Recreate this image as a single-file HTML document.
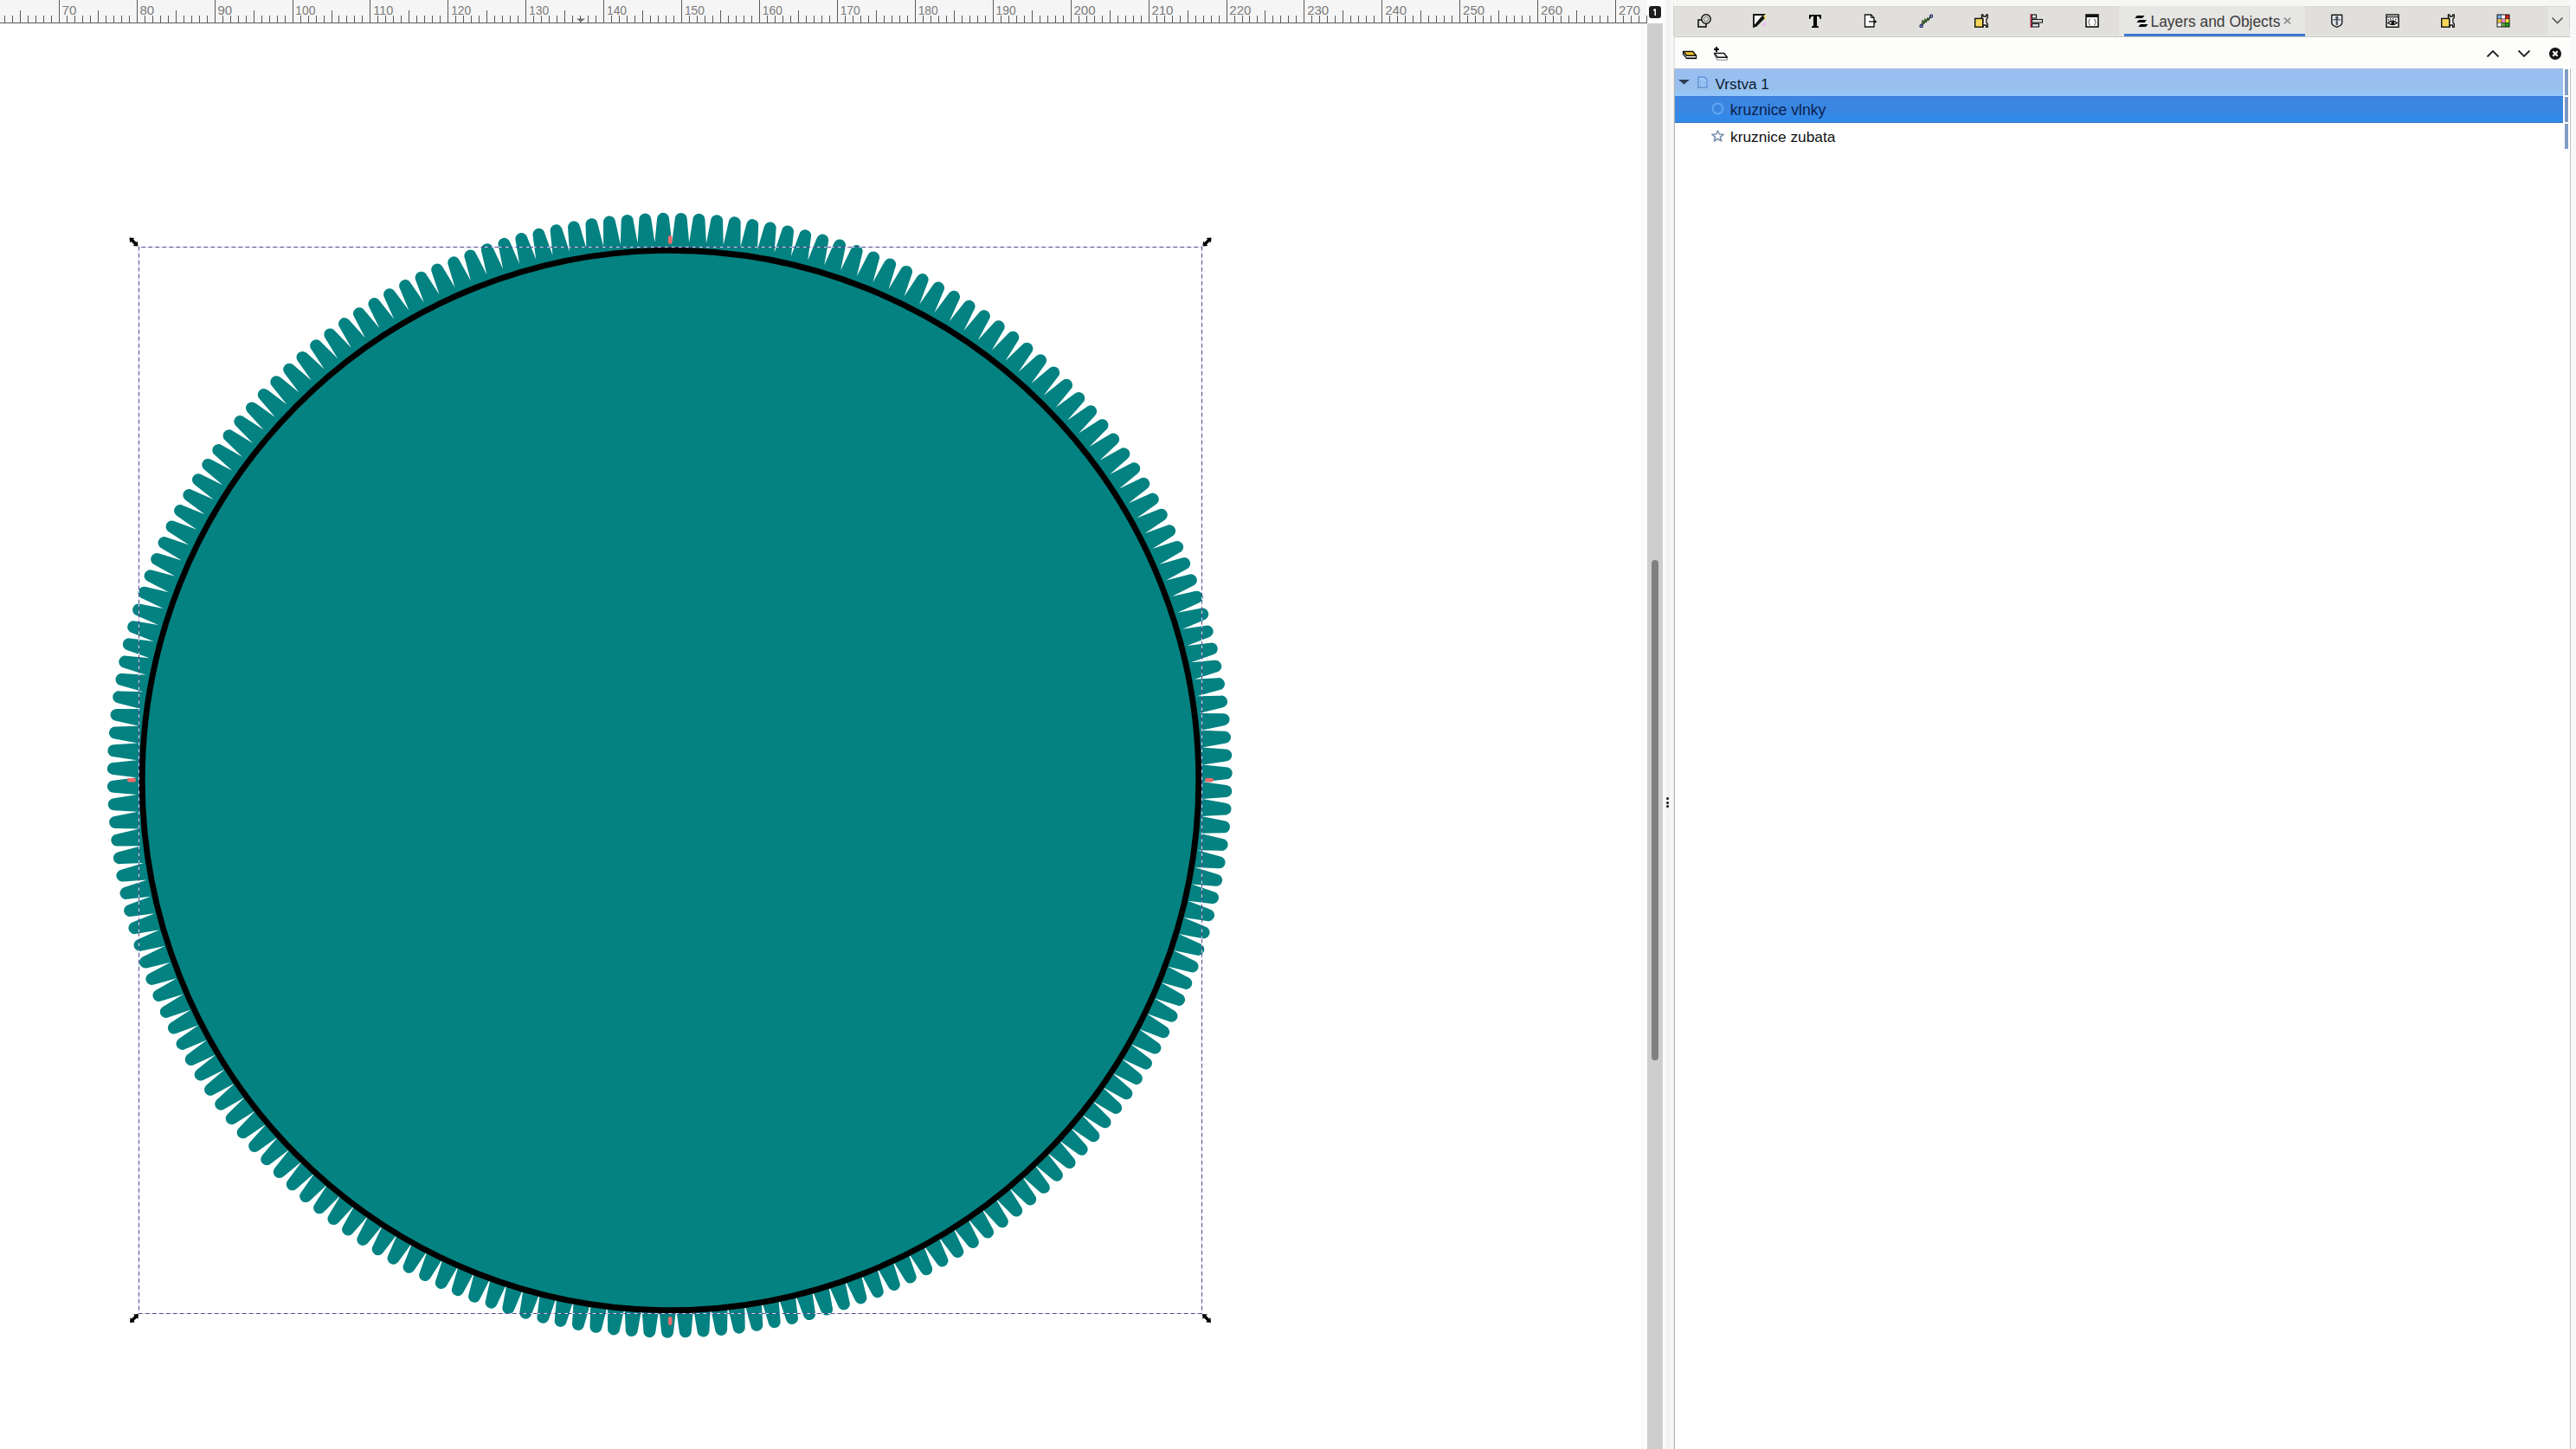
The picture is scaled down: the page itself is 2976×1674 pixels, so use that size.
<!DOCTYPE html>
<html><head><meta charset="utf-8"><style>
html,body{margin:0;padding:0;width:2976px;height:1674px;overflow:hidden;background:#fff;}
.abs{position:absolute;display:block;}
.txt{font-family:"Liberation Sans",sans-serif;white-space:nowrap;}
</style></head><body>
<svg class="abs" style="left:0;top:27px" width="1903" height="1647" viewBox="0 27 1903 1647">
<path d="M756.44 279.99L759.04 252.92A7.0 7.0 0 0 1 773.04 252.75L776.29 279.76L779.76 252.78A7.0 7.0 0 0 1 793.76 253.06L796.13 280.16L800.47 253.31A7.0 7.0 0 0 1 814.45 254.04L815.95 281.20L821.15 254.50A7.0 7.0 0 0 1 835.10 255.68L835.73 282.88L841.79 256.36A7.0 7.0 0 0 1 855.69 257.99L855.44 285.19L862.35 258.88A7.0 7.0 0 0 1 876.19 260.96L875.07 288.14L882.82 262.07A7.0 7.0 0 0 1 896.59 264.59L894.59 291.72L903.18 265.91A7.0 7.0 0 0 1 916.86 268.88L913.99 295.93L923.40 270.41A7.0 7.0 0 0 1 936.98 273.81L933.24 300.75L943.47 275.55A7.0 7.0 0 0 1 956.93 279.40L952.32 306.20L963.36 281.34A7.0 7.0 0 0 1 976.69 285.62L971.22 312.26L983.06 287.77A7.0 7.0 0 0 1 996.25 292.47L989.92 318.93L1002.54 294.83A7.0 7.0 0 0 1 1015.57 299.95L1008.39 326.19L1021.78 302.51A7.0 7.0 0 0 1 1034.63 308.05L1026.62 334.04L1040.76 310.81A7.0 7.0 0 0 1 1053.43 316.76L1044.58 342.48L1059.47 319.72A7.0 7.0 0 0 1 1071.94 326.07L1062.27 351.49L1077.87 329.22A7.0 7.0 0 0 1 1090.14 335.97L1079.65 361.07L1095.97 339.31A7.0 7.0 0 0 1 1108.01 346.46L1096.72 371.20L1113.73 349.98A7.0 7.0 0 0 1 1125.53 357.51L1113.45 381.88L1131.13 361.22A7.0 7.0 0 0 1 1142.69 369.12L1129.83 393.09L1148.17 373.01A7.0 7.0 0 0 1 1159.46 381.28L1145.83 404.82L1164.81 385.34A7.0 7.0 0 0 1 1175.83 393.98L1161.46 417.06L1181.05 398.20A7.0 7.0 0 0 1 1191.79 407.19L1176.68 429.80L1196.87 411.58A7.0 7.0 0 0 1 1207.31 420.91L1191.48 443.03L1212.25 425.47A7.0 7.0 0 0 1 1222.39 435.12L1205.85 456.72L1227.17 439.84A7.0 7.0 0 0 1 1236.99 449.82L1219.77 470.87L1241.63 454.68A7.0 7.0 0 0 1 1251.12 464.97L1233.22 485.46L1255.59 469.98A7.0 7.0 0 0 1 1264.75 480.57L1246.20 500.47L1269.06 485.73A7.0 7.0 0 0 1 1277.87 496.61L1258.69 515.90L1282.01 501.90A7.0 7.0 0 0 1 1290.46 513.06L1270.68 531.72L1294.44 518.48A7.0 7.0 0 0 1 1302.53 529.90L1282.15 547.91L1306.32 535.45A7.0 7.0 0 0 1 1314.04 547.13L1293.09 564.47L1317.65 552.79A7.0 7.0 0 0 1 1324.99 564.71L1303.49 581.38L1328.42 570.49A7.0 7.0 0 0 1 1335.37 582.64L1313.34 598.61L1338.61 588.53A7.0 7.0 0 0 1 1345.16 600.90L1322.64 616.14L1348.21 606.89A7.0 7.0 0 0 1 1354.36 619.46L1331.36 633.97L1357.22 625.54A7.0 7.0 0 0 1 1362.96 638.31L1339.50 652.07L1365.62 644.48A7.0 7.0 0 0 1 1370.95 657.42L1347.06 670.42L1373.41 663.68A7.0 7.0 0 0 1 1378.32 676.79L1354.02 689.01L1380.57 683.12A7.0 7.0 0 0 1 1385.06 696.38L1360.38 707.81L1387.11 702.78A7.0 7.0 0 0 1 1391.17 716.18L1366.13 726.81L1393.01 722.64A7.0 7.0 0 0 1 1396.63 736.16L1371.27 745.98L1398.26 742.68A7.0 7.0 0 0 1 1401.45 756.31L1375.78 765.31L1402.87 762.87A7.0 7.0 0 0 1 1405.61 776.60L1379.67 784.77L1406.83 783.21A7.0 7.0 0 0 1 1409.13 797.02L1382.93 804.35L1410.12 803.66A7.0 7.0 0 0 1 1411.98 817.54L1385.56 824.02L1412.76 824.21A7.0 7.0 0 0 1 1414.16 838.14L1387.55 843.77L1414.73 844.84A7.0 7.0 0 0 1 1415.69 858.80L1388.91 863.57L1416.04 865.51A7.0 7.0 0 0 1 1416.54 879.50L1389.63 883.40L1416.68 886.22A7.0 7.0 0 0 1 1416.73 900.22L1389.70 903.25L1416.65 906.94A7.0 7.0 0 0 1 1416.26 920.93L1389.14 923.09L1415.96 927.64A7.0 7.0 0 0 1 1415.11 941.62L1387.94 942.90L1414.60 948.32A7.0 7.0 0 0 1 1413.30 962.26L1386.10 962.66L1412.57 968.94A7.0 7.0 0 0 1 1410.83 982.83L1383.63 982.36L1409.88 989.48A7.0 7.0 0 0 1 1407.69 1003.30L1380.52 1001.96L1406.53 1009.92A7.0 7.0 0 0 1 1403.90 1023.67L1376.79 1021.45L1402.53 1030.25A7.0 7.0 0 0 1 1399.45 1043.91L1372.43 1040.81L1397.87 1050.44A7.0 7.0 0 0 1 1394.35 1063.99L1367.44 1060.03L1392.56 1070.46A7.0 7.0 0 0 1 1388.61 1083.89L1361.84 1079.07L1386.61 1090.31A7.0 7.0 0 0 1 1382.23 1103.60L1355.63 1097.92L1380.02 1109.95A7.0 7.0 0 0 1 1375.22 1123.10L1348.81 1116.56L1372.81 1129.37A7.0 7.0 0 0 1 1367.58 1142.36L1341.40 1134.97L1364.97 1148.55A7.0 7.0 0 0 1 1359.33 1161.36L1333.40 1153.13L1356.52 1167.46A7.0 7.0 0 0 1 1350.47 1180.09L1324.82 1171.03L1347.46 1186.10A7.0 7.0 0 0 1 1341.01 1198.52L1315.66 1188.64L1337.81 1204.43A7.0 7.0 0 0 1 1330.96 1216.64L1305.95 1205.95L1327.58 1222.44A7.0 7.0 0 0 1 1320.33 1234.42L1295.68 1222.93L1316.76 1240.11A7.0 7.0 0 0 1 1309.14 1251.85L1284.87 1239.57L1305.39 1257.43A7.0 7.0 0 0 1 1297.39 1268.92L1273.52 1255.86L1293.46 1274.37A7.0 7.0 0 0 1 1285.09 1285.59L1261.66 1271.78L1280.99 1290.91A7.0 7.0 0 0 1 1272.27 1301.86L1249.30 1287.30L1268.00 1307.05A7.0 7.0 0 0 1 1258.93 1317.71L1236.44 1302.42L1254.49 1322.76A7.0 7.0 0 0 1 1245.08 1333.12L1223.09 1317.11L1240.49 1338.02A7.0 7.0 0 0 1 1230.75 1348.08L1209.29 1331.37L1226.00 1352.83A7.0 7.0 0 0 1 1215.94 1362.57L1195.03 1345.17L1211.04 1367.16A7.0 7.0 0 0 1 1200.67 1376.57L1180.33 1358.51L1195.62 1381.01A7.0 7.0 0 0 1 1184.96 1390.08L1165.21 1371.37L1179.77 1394.35A7.0 7.0 0 0 1 1168.82 1403.07L1149.68 1383.73L1163.50 1407.17A7.0 7.0 0 0 1 1152.27 1415.53L1133.77 1395.59L1146.82 1419.46A7.0 7.0 0 0 1 1135.33 1427.46L1117.48 1406.93L1129.75 1431.20A7.0 7.0 0 0 1 1118.01 1438.83L1100.83 1417.74L1112.32 1442.40A7.0 7.0 0 0 1 1100.34 1449.64L1083.85 1428.01L1094.53 1453.02A7.0 7.0 0 0 1 1082.32 1459.87L1066.54 1437.72L1076.41 1463.06A7.0 7.0 0 0 1 1063.99 1469.52L1048.93 1446.87L1057.98 1472.52A7.0 7.0 0 0 1 1045.35 1478.57L1031.03 1455.45L1039.25 1481.38A7.0 7.0 0 0 1 1026.44 1487.02L1012.86 1463.45L1020.25 1489.63A7.0 7.0 0 0 1 1007.26 1494.85L994.45 1470.86L1000.98 1497.26A7.0 7.0 0 0 1 987.84 1502.06L975.81 1477.67L981.49 1504.27A7.0 7.0 0 0 1 968.19 1508.65L956.96 1483.88L961.78 1510.64A7.0 7.0 0 0 1 948.35 1514.59L937.91 1489.47L941.87 1516.38A7.0 7.0 0 0 1 928.32 1519.90L918.70 1494.45L921.79 1521.48A7.0 7.0 0 0 1 908.13 1524.55L899.34 1498.81L901.55 1525.92A7.0 7.0 0 0 1 887.80 1528.55L879.85 1502.54L881.19 1529.71A7.0 7.0 0 0 1 867.36 1531.90L860.24 1505.65L860.71 1532.84A7.0 7.0 0 0 1 846.82 1534.59L840.55 1508.12L840.14 1535.31A7.0 7.0 0 0 1 826.20 1536.61L820.79 1509.95L819.50 1537.12A7.0 7.0 0 0 1 805.52 1537.96L800.97 1511.15L798.81 1538.26A7.0 7.0 0 0 1 784.82 1538.65L781.14 1511.71L778.10 1538.74A7.0 7.0 0 0 1 764.10 1538.68L761.29 1511.62L757.38 1538.54A7.0 7.0 0 0 1 743.39 1538.03L741.45 1510.90L736.68 1537.68A7.0 7.0 0 0 1 722.72 1536.72L721.65 1509.54L716.02 1536.15A7.0 7.0 0 0 1 702.09 1534.74L701.91 1507.55L695.42 1533.96A7.0 7.0 0 0 1 681.55 1532.10L682.23 1504.91L674.90 1531.11A7.0 7.0 0 0 1 661.09 1528.80L662.66 1501.65L654.48 1527.59A7.0 7.0 0 0 1 640.76 1524.85L643.19 1497.76L634.19 1523.42A7.0 7.0 0 0 1 620.56 1520.23L623.87 1493.24L614.04 1518.60A7.0 7.0 0 0 1 600.52 1514.98L604.70 1488.10L594.06 1513.13A7.0 7.0 0 0 1 580.66 1509.07L585.70 1482.35L574.26 1507.02A7.0 7.0 0 0 1 561.00 1502.53L566.90 1475.98L554.67 1500.28A7.0 7.0 0 0 1 541.56 1495.37L548.32 1469.02L535.31 1492.91A7.0 7.0 0 0 1 522.37 1487.57L529.96 1461.46L516.20 1484.92A7.0 7.0 0 0 1 503.43 1479.17L511.87 1453.31L497.35 1476.31A7.0 7.0 0 0 1 484.78 1470.16L494.04 1444.58L478.79 1467.11A7.0 7.0 0 0 1 466.42 1460.55L476.50 1435.29L460.54 1457.31A7.0 7.0 0 0 1 448.39 1450.36L459.28 1425.43L442.61 1446.93A7.0 7.0 0 0 1 430.69 1439.59L442.38 1415.03L425.02 1435.97A7.0 7.0 0 0 1 413.35 1428.25L425.82 1404.08L407.80 1424.46A7.0 7.0 0 0 1 396.38 1416.36L409.62 1392.61L390.96 1412.39A7.0 7.0 0 0 1 379.80 1403.94L393.81 1380.62L374.51 1399.79A7.0 7.0 0 0 1 363.63 1390.98L378.38 1368.13L358.48 1386.67A7.0 7.0 0 0 1 347.89 1377.51L363.37 1355.15L342.88 1373.04A7.0 7.0 0 0 1 332.59 1363.54L348.78 1341.69L327.73 1358.91A7.0 7.0 0 0 1 317.75 1349.09L334.64 1327.76L313.04 1344.30A7.0 7.0 0 0 1 303.38 1334.16L320.95 1313.39L298.83 1329.22A7.0 7.0 0 0 1 289.50 1318.78L307.73 1298.59L285.11 1313.70A7.0 7.0 0 0 1 276.13 1302.96L294.99 1283.37L271.90 1297.74A7.0 7.0 0 0 1 263.27 1286.72L282.75 1267.74L259.21 1281.36A7.0 7.0 0 0 1 250.94 1270.07L271.02 1251.73L247.05 1264.59A7.0 7.0 0 0 1 239.15 1253.03L259.82 1235.35L235.45 1247.43A7.0 7.0 0 0 1 227.92 1235.62L249.14 1218.62L224.40 1229.90A7.0 7.0 0 0 1 217.25 1217.86L239.01 1201.55L213.92 1212.03A7.0 7.0 0 0 1 207.16 1199.77L229.44 1184.16L204.02 1193.83A7.0 7.0 0 0 1 197.66 1181.36L220.43 1166.48L194.71 1175.32A7.0 7.0 0 0 1 188.76 1162.65L212.00 1148.51L186.00 1156.52A7.0 7.0 0 0 1 180.47 1143.67L204.14 1130.28L177.91 1137.45A7.0 7.0 0 0 1 172.79 1124.42L196.88 1111.81L170.43 1118.13A7.0 7.0 0 0 1 165.73 1104.94L190.22 1093.11L163.58 1098.58A7.0 7.0 0 0 1 159.31 1085.25L184.17 1074.21L157.36 1078.82A7.0 7.0 0 0 1 153.52 1065.35L178.72 1055.13L151.78 1058.87A7.0 7.0 0 0 1 148.38 1045.29L173.90 1035.87L146.85 1038.74A7.0 7.0 0 0 1 143.89 1025.06L169.70 1016.48L142.57 1018.47A7.0 7.0 0 0 1 140.05 1004.70L166.12 996.95L138.94 998.08A7.0 7.0 0 0 1 136.87 984.23L163.18 977.33L135.98 977.57A7.0 7.0 0 0 1 134.35 963.67L160.86 957.61L133.67 956.98A7.0 7.0 0 0 1 132.49 943.03L159.19 937.84L132.03 936.33A7.0 7.0 0 0 1 131.30 922.35L158.15 918.02L131.06 915.64A7.0 7.0 0 0 1 130.78 901.64L157.75 898.17L130.75 894.92A7.0 7.0 0 0 1 130.92 880.92L158.00 878.33L131.11 874.21A7.0 7.0 0 0 1 131.73 860.22L158.88 858.50L132.14 853.51A7.0 7.0 0 0 1 133.21 839.56L160.40 838.71L133.83 832.87A7.0 7.0 0 0 1 135.35 818.95L162.55 818.98L136.19 812.28A7.0 7.0 0 0 1 138.16 798.42L165.34 799.33L139.21 791.79A7.0 7.0 0 0 1 141.62 778.00L168.77 779.78L142.89 771.40A7.0 7.0 0 0 1 145.75 757.69L172.82 760.35L147.22 751.14A7.0 7.0 0 0 1 150.52 737.53L177.49 741.06L152.21 731.03A7.0 7.0 0 0 1 155.94 717.54L182.78 721.93L157.84 711.09A7.0 7.0 0 0 1 162.00 697.73L188.69 702.98L164.10 691.35A7.0 7.0 0 0 1 168.70 678.12L195.20 684.23L171.01 671.81A7.0 7.0 0 0 1 176.02 658.74L202.32 665.71L178.53 652.51A7.0 7.0 0 0 1 183.97 639.61L210.02 647.42L186.68 633.46A7.0 7.0 0 0 1 192.53 620.74L218.32 629.38L195.43 614.68A7.0 7.0 0 0 1 201.69 602.16L227.19 611.63L204.79 596.20A7.0 7.0 0 0 1 211.44 583.88L236.62 594.17L214.73 578.02A7.0 7.0 0 0 1 221.78 565.93L246.62 577.02L225.26 560.18A7.0 7.0 0 0 1 232.70 548.32L257.16 560.20L236.35 542.68A7.0 7.0 0 0 1 244.17 531.07L268.24 543.74L248.01 525.55A7.0 7.0 0 0 1 256.19 514.20L279.84 527.63L260.21 508.81A7.0 7.0 0 0 1 268.75 497.72L291.96 511.91L272.94 492.47A7.0 7.0 0 0 1 281.84 481.66L304.57 496.59L286.19 476.54A7.0 7.0 0 0 1 295.43 466.03L317.68 481.68L299.95 461.05A7.0 7.0 0 0 1 309.53 450.84L331.25 467.20L314.20 446.01A7.0 7.0 0 0 1 324.10 436.12L345.29 453.17L328.93 431.44A7.0 7.0 0 0 1 339.14 421.87L359.77 439.60L344.12 417.35A7.0 7.0 0 0 1 354.63 408.11L374.68 426.50L359.75 403.76A7.0 7.0 0 0 1 370.56 394.86L390.00 413.88L375.82 390.68A7.0 7.0 0 0 1 386.91 382.13L405.73 401.77L392.29 378.12A7.0 7.0 0 0 1 403.65 369.94L421.83 390.17L409.17 366.10A7.0 7.0 0 0 1 420.79 358.29L438.30 379.10L426.42 354.63A7.0 7.0 0 0 1 438.28 347.20L455.12 368.56L444.03 343.72A7.0 7.0 0 0 1 456.13 336.67L472.27 358.57L461.99 333.39A7.0 7.0 0 0 1 474.31 326.73L489.73 349.13L480.27 323.63A7.0 7.0 0 0 1 492.79 317.38L507.49 340.27L498.85 314.48A7.0 7.0 0 0 1 511.57 308.63L525.52 331.98L517.72 305.92A7.0 7.0 0 0 1 530.62 300.49L543.81 324.27L536.85 297.98A7.0 7.0 0 0 1 549.92 292.96L562.34 317.16L556.23 290.66A7.0 7.0 0 0 1 569.46 286.07L581.09 310.65L575.84 283.96A7.0 7.0 0 0 1 589.21 279.80L600.04 304.75L595.65 277.91A7.0 7.0 0 0 1 609.15 274.18L619.17 299.46L615.65 272.49A7.0 7.0 0 0 1 629.26 269.20L638.46 294.79L635.81 267.72A7.0 7.0 0 0 1 649.52 264.87L657.89 290.74L656.12 263.60A7.0 7.0 0 0 1 669.91 261.19L677.44 287.32L676.54 260.14A7.0 7.0 0 0 1 690.40 258.17L697.09 284.54L697.07 257.34A7.0 7.0 0 0 1 710.99 255.82L716.83 282.39L717.68 255.20A7.0 7.0 0 0 1 731.63 254.13L736.61 280.87L738.34 253.73A7.0 7.0 0 0 1 752.33 253.11L756.44 279.99Z" fill="#038281"/>
<ellipse cx="774.5" cy="901.5" rx="610.25" ry="612.25" fill="#038281" stroke="#000" stroke-width="6.8"/>
<rect x="160.5" y="285.5" width="1228" height="1232" fill="none" stroke="#dcd8fc" stroke-width="1"/>
<g stroke="#4e4a8a" stroke-width="1" stroke-dasharray="4.5 3.5" fill="none">
<path d="M160 285.5 H1389" stroke-dashoffset="4.5"/>
<path d="M160 1517.5 H1389"/>
<path d="M160.5 285 V1518"/>
<path d="M1388.5 285 V1518"/>
</g>
<g fill="#000"><path d="M149.5 274.5 L150.1 280.4 L151.5 279.0 L155.0 282.5 L153.6 283.9 L159.5 284.5 L158.9 278.6 L157.5 280.0 L154.0 276.5 L155.4 275.1 Z"/><path d="M1389.5 284.5 L1395.4 283.9 L1394.0 282.5 L1397.5 279.0 L1398.9 280.4 L1399.5 274.5 L1393.6 275.1 L1395.0 276.5 L1391.5 280.0 L1390.1 278.6 Z"/><path d="M150.0 1528.0 L155.9 1527.4 L154.5 1526.0 L158.0 1522.5 L159.4 1523.9 L160.0 1518.0 L154.1 1518.6 L155.5 1520.0 L152.0 1523.5 L150.6 1522.1 Z"/><path d="M1389.0 1518.0 L1389.6 1523.9 L1391.0 1522.5 L1394.5 1526.0 L1393.1 1527.4 L1399.0 1528.0 L1398.4 1522.1 L1397.0 1523.5 L1393.5 1520.0 L1394.9 1518.6 Z"/></g>
<g fill="#ef6b6b">
<rect x="772" y="272" width="4.5" height="10" rx="2.2"/>
<rect x="772" y="1521" width="4.5" height="10" rx="2.2"/>
<rect x="147" y="899" width="10" height="4.5" rx="2.2"/>
<rect x="1392" y="899" width="10" height="4.5" rx="2.2"/>
</g>
</svg>
<svg class="abs" style="left:0;top:0" width="1903" height="27" viewBox="0 0 1903 27">
<rect width="1903" height="27" fill="#f5f5f5"/>
<g fill="#5a5a5a"><rect x="5" y="18" width="1" height="8"/><rect x="14" y="18" width="1" height="8"/><rect x="23" y="12" width="1" height="14"/><rect x="32" y="18" width="1" height="8"/><rect x="41" y="18" width="1" height="8"/><rect x="50" y="18" width="1" height="8"/><rect x="59" y="18" width="1" height="8"/><rect x="68" y="0" width="1" height="26"/><rect x="77" y="18" width="1" height="8"/><rect x="86" y="18" width="1" height="8"/><rect x="95" y="18" width="1" height="8"/><rect x="104" y="18" width="1" height="8"/><rect x="113" y="12" width="1" height="14"/><rect x="122" y="18" width="1" height="8"/><rect x="131" y="18" width="1" height="8"/><rect x="140" y="18" width="1" height="8"/><rect x="149" y="18" width="1" height="8"/><rect x="158" y="0" width="1" height="26"/><rect x="167" y="18" width="1" height="8"/><rect x="176" y="18" width="1" height="8"/><rect x="185" y="18" width="1" height="8"/><rect x="194" y="18" width="1" height="8"/><rect x="203" y="12" width="1" height="14"/><rect x="212" y="18" width="1" height="8"/><rect x="221" y="18" width="1" height="8"/><rect x="230" y="18" width="1" height="8"/><rect x="239" y="18" width="1" height="8"/><rect x="248" y="0" width="1" height="26"/><rect x="257" y="18" width="1" height="8"/><rect x="266" y="18" width="1" height="8"/><rect x="275" y="18" width="1" height="8"/><rect x="284" y="18" width="1" height="8"/><rect x="293" y="12" width="1" height="14"/><rect x="302" y="18" width="1" height="8"/><rect x="311" y="18" width="1" height="8"/><rect x="320" y="18" width="1" height="8"/><rect x="329" y="18" width="1" height="8"/><rect x="338" y="0" width="1" height="26"/><rect x="347" y="18" width="1" height="8"/><rect x="356" y="18" width="1" height="8"/><rect x="365" y="18" width="1" height="8"/><rect x="374" y="18" width="1" height="8"/><rect x="383" y="12" width="1" height="14"/><rect x="391" y="18" width="1" height="8"/><rect x="400" y="18" width="1" height="8"/><rect x="409" y="18" width="1" height="8"/><rect x="418" y="18" width="1" height="8"/><rect x="427" y="0" width="1" height="26"/><rect x="436" y="18" width="1" height="8"/><rect x="445" y="18" width="1" height="8"/><rect x="454" y="18" width="1" height="8"/><rect x="463" y="18" width="1" height="8"/><rect x="472" y="12" width="1" height="14"/><rect x="481" y="18" width="1" height="8"/><rect x="490" y="18" width="1" height="8"/><rect x="499" y="18" width="1" height="8"/><rect x="508" y="18" width="1" height="8"/><rect x="517" y="0" width="1" height="26"/><rect x="526" y="18" width="1" height="8"/><rect x="535" y="18" width="1" height="8"/><rect x="544" y="18" width="1" height="8"/><rect x="553" y="18" width="1" height="8"/><rect x="562" y="12" width="1" height="14"/><rect x="571" y="18" width="1" height="8"/><rect x="580" y="18" width="1" height="8"/><rect x="589" y="18" width="1" height="8"/><rect x="598" y="18" width="1" height="8"/><rect x="607" y="0" width="1" height="26"/><rect x="616" y="18" width="1" height="8"/><rect x="625" y="18" width="1" height="8"/><rect x="634" y="18" width="1" height="8"/><rect x="643" y="18" width="1" height="8"/><rect x="652" y="12" width="1" height="14"/><rect x="661" y="18" width="1" height="8"/><rect x="670" y="18" width="1" height="8"/><rect x="679" y="18" width="1" height="8"/><rect x="688" y="18" width="1" height="8"/><rect x="697" y="0" width="1" height="26"/><rect x="706" y="18" width="1" height="8"/><rect x="715" y="18" width="1" height="8"/><rect x="724" y="18" width="1" height="8"/><rect x="733" y="18" width="1" height="8"/><rect x="742" y="12" width="1" height="14"/><rect x="751" y="18" width="1" height="8"/><rect x="760" y="18" width="1" height="8"/><rect x="769" y="18" width="1" height="8"/><rect x="778" y="18" width="1" height="8"/><rect x="787" y="0" width="1" height="26"/><rect x="796" y="18" width="1" height="8"/><rect x="805" y="18" width="1" height="8"/><rect x="814" y="18" width="1" height="8"/><rect x="823" y="18" width="1" height="8"/><rect x="832" y="12" width="1" height="14"/><rect x="841" y="18" width="1" height="8"/><rect x="850" y="18" width="1" height="8"/><rect x="859" y="18" width="1" height="8"/><rect x="868" y="18" width="1" height="8"/><rect x="877" y="0" width="1" height="26"/><rect x="886" y="18" width="1" height="8"/><rect x="895" y="18" width="1" height="8"/><rect x="904" y="18" width="1" height="8"/><rect x="913" y="18" width="1" height="8"/><rect x="922" y="12" width="1" height="14"/><rect x="931" y="18" width="1" height="8"/><rect x="940" y="18" width="1" height="8"/><rect x="949" y="18" width="1" height="8"/><rect x="958" y="18" width="1" height="8"/><rect x="967" y="0" width="1" height="26"/><rect x="976" y="18" width="1" height="8"/><rect x="985" y="18" width="1" height="8"/><rect x="994" y="18" width="1" height="8"/><rect x="1003" y="18" width="1" height="8"/><rect x="1012" y="12" width="1" height="14"/><rect x="1021" y="18" width="1" height="8"/><rect x="1030" y="18" width="1" height="8"/><rect x="1039" y="18" width="1" height="8"/><rect x="1048" y="18" width="1" height="8"/><rect x="1057" y="0" width="1" height="26"/><rect x="1066" y="18" width="1" height="8"/><rect x="1075" y="18" width="1" height="8"/><rect x="1084" y="18" width="1" height="8"/><rect x="1093" y="18" width="1" height="8"/><rect x="1102" y="12" width="1" height="14"/><rect x="1111" y="18" width="1" height="8"/><rect x="1120" y="18" width="1" height="8"/><rect x="1129" y="18" width="1" height="8"/><rect x="1138" y="18" width="1" height="8"/><rect x="1147" y="0" width="1" height="26"/><rect x="1156" y="18" width="1" height="8"/><rect x="1165" y="18" width="1" height="8"/><rect x="1174" y="18" width="1" height="8"/><rect x="1183" y="18" width="1" height="8"/><rect x="1192" y="12" width="1" height="14"/><rect x="1201" y="18" width="1" height="8"/><rect x="1210" y="18" width="1" height="8"/><rect x="1219" y="18" width="1" height="8"/><rect x="1228" y="18" width="1" height="8"/><rect x="1237" y="0" width="1" height="26"/><rect x="1246" y="18" width="1" height="8"/><rect x="1255" y="18" width="1" height="8"/><rect x="1264" y="18" width="1" height="8"/><rect x="1273" y="18" width="1" height="8"/><rect x="1282" y="12" width="1" height="14"/><rect x="1291" y="18" width="1" height="8"/><rect x="1300" y="18" width="1" height="8"/><rect x="1309" y="18" width="1" height="8"/><rect x="1318" y="18" width="1" height="8"/><rect x="1327" y="0" width="1" height="26"/><rect x="1336" y="18" width="1" height="8"/><rect x="1345" y="18" width="1" height="8"/><rect x="1354" y="18" width="1" height="8"/><rect x="1363" y="18" width="1" height="8"/><rect x="1372" y="12" width="1" height="14"/><rect x="1381" y="18" width="1" height="8"/><rect x="1390" y="18" width="1" height="8"/><rect x="1399" y="18" width="1" height="8"/><rect x="1408" y="18" width="1" height="8"/><rect x="1417" y="0" width="1" height="26"/><rect x="1426" y="18" width="1" height="8"/><rect x="1435" y="18" width="1" height="8"/><rect x="1443" y="18" width="1" height="8"/><rect x="1452" y="18" width="1" height="8"/><rect x="1461" y="12" width="1" height="14"/><rect x="1470" y="18" width="1" height="8"/><rect x="1479" y="18" width="1" height="8"/><rect x="1488" y="18" width="1" height="8"/><rect x="1497" y="18" width="1" height="8"/><rect x="1506" y="0" width="1" height="26"/><rect x="1515" y="18" width="1" height="8"/><rect x="1524" y="18" width="1" height="8"/><rect x="1533" y="18" width="1" height="8"/><rect x="1542" y="18" width="1" height="8"/><rect x="1551" y="12" width="1" height="14"/><rect x="1560" y="18" width="1" height="8"/><rect x="1569" y="18" width="1" height="8"/><rect x="1578" y="18" width="1" height="8"/><rect x="1587" y="18" width="1" height="8"/><rect x="1596" y="0" width="1" height="26"/><rect x="1605" y="18" width="1" height="8"/><rect x="1614" y="18" width="1" height="8"/><rect x="1623" y="18" width="1" height="8"/><rect x="1632" y="18" width="1" height="8"/><rect x="1641" y="12" width="1" height="14"/><rect x="1650" y="18" width="1" height="8"/><rect x="1659" y="18" width="1" height="8"/><rect x="1668" y="18" width="1" height="8"/><rect x="1677" y="18" width="1" height="8"/><rect x="1686" y="0" width="1" height="26"/><rect x="1695" y="18" width="1" height="8"/><rect x="1704" y="18" width="1" height="8"/><rect x="1713" y="18" width="1" height="8"/><rect x="1722" y="18" width="1" height="8"/><rect x="1731" y="12" width="1" height="14"/><rect x="1740" y="18" width="1" height="8"/><rect x="1749" y="18" width="1" height="8"/><rect x="1758" y="18" width="1" height="8"/><rect x="1767" y="18" width="1" height="8"/><rect x="1776" y="0" width="1" height="26"/><rect x="1785" y="18" width="1" height="8"/><rect x="1794" y="18" width="1" height="8"/><rect x="1803" y="18" width="1" height="8"/><rect x="1812" y="18" width="1" height="8"/><rect x="1821" y="12" width="1" height="14"/><rect x="1830" y="18" width="1" height="8"/><rect x="1839" y="18" width="1" height="8"/><rect x="1848" y="18" width="1" height="8"/><rect x="1857" y="18" width="1" height="8"/><rect x="1866" y="0" width="1" height="26"/><rect x="1875" y="18" width="1" height="8"/><rect x="1884" y="18" width="1" height="8"/><rect x="1893" y="18" width="1" height="8"/><rect x="1902" y="18" width="1" height="8"/><rect x="0" y="26" width="1903" height="1"/></g>
<g fill="#7a7a7a" font-family="'Liberation Sans', sans-serif" font-size="15"><text x="71.6" y="17.1">70</text><text x="161.5" y="17.1">80</text><text x="251.4" y="17.1">90</text><text x="341.3" y="17.1" textLength="23" lengthAdjust="spacingAndGlyphs">100</text><text x="431.3" y="17.1" textLength="23" lengthAdjust="spacingAndGlyphs">110</text><text x="521.2" y="17.1" textLength="23" lengthAdjust="spacingAndGlyphs">120</text><text x="611.1" y="17.1" textLength="23" lengthAdjust="spacingAndGlyphs">130</text><text x="701.0" y="17.1" textLength="23" lengthAdjust="spacingAndGlyphs">140</text><text x="790.9" y="17.1" textLength="23" lengthAdjust="spacingAndGlyphs">150</text><text x="880.8" y="17.1" textLength="23" lengthAdjust="spacingAndGlyphs">160</text><text x="970.7" y="17.1" textLength="23" lengthAdjust="spacingAndGlyphs">170</text><text x="1060.7" y="17.1" textLength="23" lengthAdjust="spacingAndGlyphs">180</text><text x="1150.6" y="17.1" textLength="23" lengthAdjust="spacingAndGlyphs">190</text><text x="1240.5" y="17.1">200</text><text x="1330.4" y="17.1">210</text><text x="1420.3" y="17.1">220</text><text x="1510.2" y="17.1">230</text><text x="1600.2" y="17.1">240</text><text x="1690.1" y="17.1">250</text><text x="1780.0" y="17.1">260</text><text x="1869.9" y="17.1">270</text></g>
<path d="M666 21.5 L676 21.5 L671 25.5 Z" fill="#6a6a6a"/>
</svg>
<div class="abs" style="left:1903px;top:0;width:18px;height:27px;background:#fff"></div>
<div class="abs" style="left:1903px;top:27px;width:18px;height:1647px;background:#cecece"></div>
<div class="abs" style="left:1908px;top:647px;width:8px;height:578px;background:#808080;border-radius:4px"></div>
<div class="abs" style="left:1905px;top:7px;width:14px;height:14px;background:#1e1e1e;border-radius:3px"></div>
<svg class="abs" style="left:1905px;top:7px" width="14" height="14" viewBox="0 0 14 14"><path d="M6.2 3.2 L8 3.2 L8 11 L6.5 11 L6.5 5 L5 5.8 L5 4.4 Z" fill="#fff"/></svg>
<div class="abs" style="left:1921px;top:0;width:13px;height:1674px;background:linear-gradient(90deg,#fdfdfd 0,#fdfdfd 2.5px,#f6f6f6 2.5px,#f6f6f6 5px,#f1f1f1 5px,#f1f1f1 8px,#f7f7f7 8px,#f7f7f7 12px,#e9e9e9 12px)"></div>
<div class="abs" style="left:1896px;top:27px;width:3px;height:1647px;background:#f8f8f8"></div>
<div class="abs" style="left:1934px;top:79px;width:1px;height:1595px;background:#b4b4b4"></div><div class="abs" style="left:1934px;top:42px;width:1px;height:37px;background:#e4e4e4"></div><div class="abs" style="left:1933px;top:7px;width:2px;height:35px;background:#d8d8d6"></div>
<div class="abs" style="left:1925px;top:921px;width:3px;height:3px;border-radius:2px;background:#111"></div>
<div class="abs" style="left:1925px;top:925.5px;width:3px;height:3px;border-radius:2px;background:#111"></div>
<div class="abs" style="left:1925px;top:930px;width:3px;height:3px;border-radius:2px;background:#111"></div>

<div class="abs" style="left:1935px;top:0;width:1034px;height:7px;background:#f6f6f3"></div>
<div class="abs" style="left:1935px;top:7px;width:1034px;height:35px;background:#e0dfdb"></div>
<div class="abs" style="left:1935px;top:7px;width:1034px;height:1px;background:#d6d6d2"></div>
<div class="abs" style="left:1935px;top:41px;width:1034px;height:1px;background:#e8e8e4"></div>
<div class="abs" style="left:1935px;top:42px;width:1034px;height:1px;background:#c4c5c0"></div>
<div class="abs" style="left:2448px;top:7px;width:215px;height:35px;background:#e6e6e4"></div>
<div class="abs" style="left:2454px;top:39px;width:209px;height:3px;background:#3b78d0"></div>
<svg class="abs" style="left:1961px;top:16px" width="16" height="16" viewBox="0 0 16 16"><rect x="1" y="7" width="9" height="8" fill="none" stroke="#111" stroke-width="1.6"/><circle cx="10" cy="6" r="5.2" fill="#e0dfdb" stroke="#111" stroke-width="1.5"/><circle cx="10" cy="6" r="2.6" fill="none" stroke="#555" stroke-width="0.8"/></svg>
<svg class="abs" style="left:2025px;top:16px" width="16" height="16" viewBox="0 0 16 16"><path d="M1 1 H13 L1 15 Z" fill="#fff" stroke="#111" stroke-width="1.8"/><path d="M1 15 L13 1 L15 4 L4 15 Z" fill="#111"/><path d="M12 2 L15 1 L15 8 Z" fill="#f0e070"/><path d="M10 14 L15 8 L15 14 Z" fill="#e8c0f0"/></svg>
<svg class="abs" style="left:2089px;top:16px" width="16" height="16" viewBox="0 0 16 16"><path d="M1 1 H15 V6 H13.8 Q13 2.6 10 2.6 V13.3 Q10 14.5 12 14.6 V16 H4 V14.6 Q6 14.5 6 13.3 V2.6 Q3 2.6 2.2 6 H1 Z" fill="#000"/></svg>
<svg class="abs" style="left:2153px;top:16px" width="16" height="16" viewBox="0 0 16 16"><path d="M1.5 1 H8.5 L12 4.5 V15 H1.5 Z" fill="#fff" stroke="#111" stroke-width="1.3"/><path d="M8.5 1 V4.5 H12" fill="none" stroke="#111" stroke-width="1"/><path d="M6 9 H12.5" stroke="#111" stroke-width="1.3"/><path d="M12 6.5 L15.5 9 L12 11.5 Z" fill="#111"/></svg>
<svg class="abs" style="left:2217px;top:16px" width="16" height="16" viewBox="0 0 16 16"><path d="M3 12.5 L4.2 7.5 L5.5 11 L7 6 L8.3 9.5 L9.8 4.8 L11 7.5 L13.5 3.5" fill="none" stroke="#3d5c34" stroke-width="1.4" stroke-linejoin="round"/><path d="M3.5 13 L13.5 3" stroke="#2e4a2a" stroke-width="1.2"/><circle cx="2.6" cy="14.2" r="1.5" fill="#fff" stroke="#1c1c6e" stroke-width="1.4"/><circle cx="14.2" cy="2.6" r="1.5" fill="#fff" stroke="#1c1c6e" stroke-width="1.4"/></svg>
<svg class="abs" style="left:2281px;top:16px" width="16" height="16" viewBox="0 0 16 16"><path d="M8.4 0.8 H10 V3 H13.6 V0.8 H15.3 V4.6 L13.8 6 V10.2 L15.3 11.6 V15.3 H13.6 V13 H10 V15.3 H8.4 V11.6 L9.8 10.2 V6 L8.4 4.6 Z" fill="#f6f4ea" stroke="#111" stroke-width="1.3" stroke-linejoin="round"/><rect x="0.7" y="5.4" width="9" height="9.8" fill="#f6d65a" stroke="#111" stroke-width="1.4"/></svg>
<svg class="abs" style="left:2345px;top:16px" width="16" height="16" viewBox="0 0 16 16"><rect x="0.5" y="0" width="1.4" height="16" fill="#c02040"/><rect x="2.5" y="1" width="5" height="4" fill="#e4e6ee" stroke="#111" stroke-width="1.1"/><rect x="2.5" y="6.5" width="12" height="3.5" fill="#e4e6ee" stroke="#111" stroke-width="1.1"/><rect x="2.5" y="11.5" width="8" height="3.5" fill="#e4e6ee" stroke="#111" stroke-width="1.1"/></svg>
<svg class="abs" style="left:2409px;top:16px" width="16" height="16" viewBox="0 0 16 16"><rect x="1" y="1" width="14" height="14" fill="#fff" stroke="#111" stroke-width="1.6"/><rect x="1" y="1" width="14" height="3" fill="#111"/><path d="M6 6 Q4.5 6 4.5 8 Q4.5 9.5 3.5 9.7 Q4.5 10 4.5 11.5 Q4.5 13 6 13 M10 6 Q11.5 6 11.5 8 Q11.5 9.5 12.5 9.7 Q11.5 10 11.5 11.5 Q11.5 13 10 13" fill="none" stroke="#555" stroke-width="1"/></svg>
<svg class="abs" style="left:2466px;top:17px" width="16" height="16" viewBox="0 0 16 16"><path d="M0.3 3.9 L2.8 1 H11.5 L9 3.9 Z M2.4 9 L5 6.1 H14 L11.5 9 Z M4.3 13.9 L6.8 11 H15.5 L13 13.9 Z" fill="#000"/></svg>
<div class="abs txt" style="left:2484.5px;top:13.6px;font-size:17.4px;color:#3c3c3c;line-height:22px;transform:scaleY(1.09);transform-origin:0 17px">Layers and Objects</div>
<svg class="abs" style="left:2638px;top:20px" width="9" height="8" viewBox="0 0 9 8"><path d="M0.8 0.6 L8.2 7.4 M8.2 0.6 L0.8 7.4" stroke="#8a8a8a" stroke-width="1.5"/></svg>
<svg class="abs" style="left:2692px;top:16px" width="16" height="16" viewBox="0 0 16 16"><path d="M1.8 1.2 H13.7 V10 Q13.7 13.5 7.75 15.3 Q1.8 13.5 1.8 10 Z" fill="#e2e8ee" stroke="#1a1a1a" stroke-width="1.4" stroke-linejoin="round"/><circle cx="7.75" cy="4.2" r="1.7" fill="#4a5058"/><rect x="6.7" y="5" width="2.1" height="7" fill="#4a5058"/><path d="M3.3 7.3 Q7.75 5.6 12.2 7.3" fill="none" stroke="#4a5058" stroke-width="1.2"/><circle cx="7.75" cy="12" r="1.2" fill="#4a5058"/></svg>
<svg class="abs" style="left:2756px;top:16px" width="16" height="16" viewBox="0 0 16 16"><rect x="1" y="1" width="14" height="14.3" fill="#fff" stroke="#111" stroke-width="1.5"/><rect x="1.5" y="1.7" width="13" height="1.3" fill="#bbb"/><rect x="1" y="3.2" width="14" height="1.1" fill="#111"/><path d="M2.8 10.5 Q8 5.6 13.2 10.5 Q8 14.6 2.8 10.5 Z" fill="none" stroke="#111" stroke-width="1.3"/><circle cx="8.3" cy="10.6" r="2" fill="#111"/><path d="M4 8 L3 6.5 M6 6.8 L5.5 5.2 M8.7 6.5 L9 5 M11.3 7.3 L12.3 5.8" stroke="#111" stroke-width="1.1"/></svg>
<svg class="abs" style="left:2820px;top:16px" width="16" height="16" viewBox="0 0 16 16"><path d="M8.4 0.8 H10 V3 H13.6 V0.8 H15.3 V4.6 L13.8 6 V10.2 L15.3 11.6 V15.3 H13.6 V13 H10 V15.3 H8.4 V11.6 L9.8 10.2 V6 L8.4 4.6 Z" fill="#f6f4ea" stroke="#111" stroke-width="1.3" stroke-linejoin="round"/><rect x="0.7" y="5.4" width="9" height="9.8" fill="#f6d65a" stroke="#111" stroke-width="1.4"/></svg>
<svg class="abs" style="left:2884px;top:16px" width="16" height="16" viewBox="0 0 16 16"><rect x="0.5" y="0.5" width="15" height="15" fill="#111"/><rect x="1.5" y="1.5" width="4" height="4" fill="#7ab0f0"/><rect x="6" y="1.5" width="4" height="4" fill="#fff"/><rect x="10.5" y="1.5" width="4" height="4" fill="#d02020"/><rect x="1.5" y="6" width="4" height="4" fill="#f0c040"/><rect x="6" y="6" width="4" height="4" fill="#e080c0"/><rect x="10.5" y="6" width="4" height="4" fill="#f0e040"/><rect x="1.5" y="10.5" width="4" height="4" fill="#fff"/><rect x="6" y="10.5" width="4" height="4" fill="#60a040"/><rect x="10.5" y="10.5" width="4" height="4" fill="#20a020"/></svg>
<div class="abs" style="left:2944px;top:8px;width:24px;height:33px;background:#e7e7e5"></div>
<div class="abs" style="left:2968px;top:8px;width:1px;height:24px;background:#d0d0d0"></div>
<svg class="abs" style="left:2946px;top:18px" width="17" height="11" viewBox="0 0 17 11"><path d="M2.5 2.5 L8.5 8.5 L14.5 2.5" fill="none" stroke="#5a5a5a" stroke-width="1.7"/></svg>
<div class="abs" style="left:2969px;top:0;width:7px;height:1674px;background:#f8f8f8"></div>
<div class="abs" style="left:1935px;top:43px;width:1034px;height:36px;background:#fdfdfb"></div>
<svg class="abs" style="left:1940px;top:50px" width="60" height="24" viewBox="1940 50 60 24"><path d="M1944.5 59.5 L1944.5 62.5 L1948.5 67.3 H1959.6 V64" fill="#fff" stroke="#111" stroke-width="1.2"/><path d="M1944.5 59.5 H1955.7 L1959.6 64.2 H1948.5 Z" fill="#f0c424" stroke="#111" stroke-width="1.4" stroke-linejoin="round"/><path d="M1948.2 67.4 H1960" stroke="#000" stroke-width="1.5"/><path d="M1983 54 V60 M1980 57 H1986" stroke="#000" stroke-width="2"/><path d="M1980.5 63.5 L1984 69.3 H1995.3 L1995.3 66.5" fill="#fff" stroke="#888" stroke-width="1.1"/><path d="M1980.5 61.5 H1991.7 L1995.4 66.3 H1984.2 Z" fill="#fff" stroke="#111" stroke-width="1.4" stroke-linejoin="round"/></svg>
<svg class="abs" style="left:2872px;top:57px" width="16" height="10" viewBox="0 0 16 10"><path d="M1.5 8.5 L8 2 L14.5 8.5" fill="none" stroke="#222" stroke-width="1.8"/></svg>
<svg class="abs" style="left:2908px;top:57px" width="16" height="10" viewBox="0 0 16 10"><path d="M1.5 1.5 L8 8 L14.5 1.5" fill="none" stroke="#222" stroke-width="1.8"/></svg>
<svg class="abs" style="left:2945px;top:55px" width="14" height="14" viewBox="0 0 14 14"><circle cx="7" cy="7" r="7" fill="#111"/><path d="M4.3 4.3 L9.7 9.7 M9.7 4.3 L4.3 9.7" stroke="#fff" stroke-width="2"/></svg>
<div class="abs" style="left:1935px;top:79px;width:1034px;height:1595px;background:#fff"></div>
<div class="abs" style="left:1935px;top:79px;width:1026px;height:32px;background:#98bff0"></div>
<div class="abs" style="left:1935px;top:100px;width:1026px;height:5px;background:#97c1ea"></div>
<div class="abs" style="left:1935px;top:105px;width:1026px;height:6px;background:#96c5f8"></div>
<div class="abs" style="left:1935px;top:79px;width:1026px;height:1px;background:#a8bcd8"></div>
<div class="abs" style="left:1935px;top:111px;width:1026px;height:31px;background:#3a86e0"></div>
<div class="abs" style="left:1935px;top:111px;width:1026px;height:1px;background:#3a7ad0"></div>
<div class="abs" style="left:1935px;top:131px;width:1026px;height:10px;background:#3289e8"></div>
<div class="abs" style="left:1935px;top:141px;width:1026px;height:1px;background:#3a72c4"></div>
<div class="abs" style="left:2969px;top:79px;width:1px;height:1595px;background:#c0c0c0"></div>
<div class="abs" style="left:2963px;top:80px;width:4px;height:30px;background:#7f9dc4"></div>
<div class="abs" style="left:2963px;top:112px;width:4px;height:29px;background:#7d96c4"></div>
<div class="abs" style="left:2963px;top:143px;width:4px;height:29px;background:#7f9dc6"></div>
<svg class="abs" style="left:1939px;top:92px" width="13" height="6" viewBox="0 0 13 6"><path d="M0 0 H13 L6.5 5.5 Z" fill="#2e3e50"/></svg>
<svg class="abs" style="left:1961px;top:88px" width="12" height="14" viewBox="0 0 12 14"><path d="M1 1 H8 L11 4 V13 H1 Z" fill="#a4c8f4" stroke="#5d92d8" stroke-width="1.5"/><path d="M3.5 4 V11 M6 4 V11 M8.5 6 V11" stroke="#7fb0ea" stroke-width="1"/></svg>
<svg class="abs" style="left:1977px;top:118px" width="15" height="15" viewBox="0 0 15 15"><circle cx="7.5" cy="7.5" r="6" fill="none" stroke="#62a8f0" stroke-width="1.9"/></svg>
<svg class="abs" style="left:1977px;top:150px" width="15" height="14" viewBox="0 0 15 14"><path d="M7.5 1 L9.3 5 L14 5.3 L10.4 8.3 L11.6 13 L7.5 10.4 L3.4 13 L4.6 8.3 L1 5.3 L5.7 5 Z" fill="#fff" stroke="#7890aa" stroke-width="1.6" stroke-linejoin="round"/></svg>
<div class="abs txt" style="left:1981.5px;top:87px;font-size:17.2px;color:#0b1a30;line-height:20px">Vrstva 1</div>
<div class="abs txt" style="left:1998.8px;top:117.2px;font-size:17.6px;color:#0a2250;line-height:20px">kruznice vlnky</div>
<div class="abs txt" style="left:1999px;top:147.8px;font-size:17.35px;color:#111;line-height:20px">kruznice zubata</div>
</body></html>
